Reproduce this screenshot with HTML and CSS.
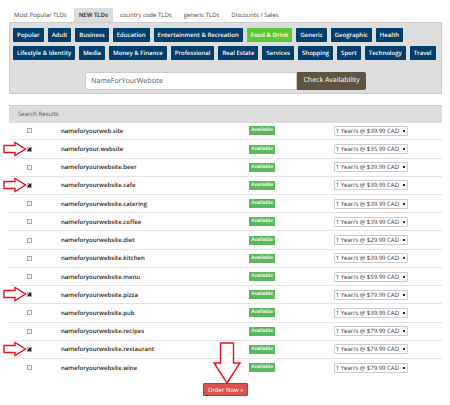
FILE: index.html
```html
<!DOCTYPE html>
<html lang="en">
<head>
<meta charset="utf-8">
<title>Domain search</title>
<link rel="stylesheet" href="styles.css">
</head>
<body>
<main class="page">
  <nav class="tabs">
    <a class="tab" href="#">Most Popular TLDs</a>
    <a class="tab active" href="#">NEW TLDs</a>
    <a class="tab" href="#">country code TLDs</a>
    <a class="tab" href="#">generic TLDs</a>
    <a class="tab" href="#">Discounts / Sales</a>
  </nav>
  <section class="panel">
    <div class="tags">
      <button class="tag">Popular</button>
      <button class="tag">Adult</button>
      <button class="tag">Business</button>
      <button class="tag">Education</button>
      <button class="tag">Entertainment &amp; Recreation</button>
      <button class="tag selected">Food &amp; Drink</button>
      <button class="tag">Generic</button>
      <button class="tag">Geographic</button>
      <button class="tag">Health</button>
    </div>
    <div class="tags">
      <button class="tag">Lifestyle &amp; Identity</button>
      <button class="tag">Media</button>
      <button class="tag">Money &amp; Finance</button>
      <button class="tag">Professional</button>
      <button class="tag">Real Estate</button>
      <button class="tag">Services</button>
      <button class="tag">Shopping</button>
      <button class="tag">Sport</button>
      <button class="tag">Technology</button>
      <button class="tag">Travel</button>
    </div>
    <form class="search">
      <input class="query" type="text" value="NameForYourWebsite" aria-label="Domain name">
      <button class="check" type="button">Check Availability</button>
    </form>
  </section>
  <table class="results">
    <colgroup><col class="pick"><col class="name-col"><col class="state"><col></colgroup>
    <thead><tr><th colspan="4">Search Results</th></tr></thead>
    <tbody id="rows"></tbody>
  </table>
  <div class="actions">
    <button class="order">Order Now »</button>
    <svg class="down" viewBox="0 0 28 42" aria-hidden="true"><path d="M7.5 1H20.5V21H27L14 41L1 21H7.5Z"/></svg>
  </div>
</main>
<script src="rows.js"></script>
</body>
</html>
```
FILE: rows.js
```js
const domains = [
  ["nameforyourweb.site", "39.99", false],
  ["nameforyour.website", "35.99", true],
  ["nameforyourwebsite.beer", "39.99", false],
  ["nameforyourwebsite.cafe", "39.99", true],
  ["nameforyourwebsite.catering", "39.99", false],
  ["nameforyourwebsite.coffee", "39.99", false],
  ["nameforyourwebsite.diet", "29.99", false],
  ["nameforyourwebsite.kitchen", "39.99", false],
  ["nameforyourwebsite.menu", "59.99", false],
  ["nameforyourwebsite.pizza", "79.99", true],
  ["nameforyourwebsite.pub", "39.99", false],
  ["nameforyourwebsite.recipes", "79.99", false],
  ["nameforyourwebsite.restaurant", "79.99", true],
  ["nameforyourwebsite.wine", "79.99", false]
];
const arrow = '<svg class="arrow" viewBox="0 0 24 16" aria-hidden="true"><path d="M1 4.5H12V1.5L22.5 8L12 14.5V11.5H1Z"/></svg>';
document.getElementById("rows").innerHTML = domains.map(([name, price, on], i) => `
  <tr>
    <td><div class="pick-box"><input type="checkbox" id="d${i}"${on ? " checked" : ""}>${on ? arrow : ""}</div></td>
    <td class="name"><label for="d${i}">${name}</label></td>
    <td class="status"><span class="badge">Available</span></td>
    <td class="price"><select aria-label="Term for ${name}"><option>1 Year/s @ $${price} CAD</option></select></td>
  </tr>`).join("");
```
FILE: styles.css
```css
* { box-sizing: border-box; }
body {
  margin: 0;
  background: #fff;
  color: #444;
  font-family: "Open Sans", sans-serif;
  font-size: 6px;
  line-height: 10px;
  text-rendering: geometricPrecision;
}
button, input, select { font: inherit; margin: 0; text-rendering: inherit; }
.page { padding: 8px 8px 0 9px; }
.tabs { display: flex; gap: 2px; }
.tab {
  padding: 2px 5px;
  height: 14px;
  color: #444;
  text-decoration: none;
  white-space: nowrap;
}
.tab.active { background: #ddd; color: #222; font-weight: 600; }
.panel {
  padding: 5px 3px 3px;
  background: #ddd;
  border: 1px solid #ccc;
}
.tags { display: flex; gap: 4px; margin-bottom: 4px; }
.tag {
  height: 14px;
  padding: 0 4px;
  border: 0;
  border-radius: 1px;
  background: #003e6b;
  color: #fff;
  font-weight: 600;
  white-space: nowrap;
}
.tag.selected { background: #5ac837; }
.search { display: flex; margin: 12px 17% 0 17%; }
.query {
  flex: 1;
  min-width: 0;
  height: 18px;
  padding: 0 5px;
  border: 1px solid #ccc;
  border-radius: 2px 0 0 2px;
  background: #fff;
  color: #555;
  font-size: 7px;
}
.check {
  height: 18px;
  padding: 0 6px;
  border: 0;
  border-radius: 0 2px 2px 0;
  background: #5e5240;
  color: #fff;
  font-size: 7px;
}
.results {
  width: 100%;
  height: 271px;
  margin-top: 11px;
  border-collapse: collapse;
  table-layout: fixed;
}
.results th {
  height: 17px;
  padding: 0 9px;
  background: #ddd;
  border-top: 1px solid #ccc;
  color: #555;
  font-weight: 400;
  text-align: left;
}
.results td { padding: 0; border-bottom: 1px solid #e4e4e4; }
.results tr:last-child td { border-bottom: 0; }
.results .status { padding-left: 2px; }
.pick { width: 12%; }
.name-col { width: 43%; }
.state { width: 20%; }
.name { font-weight: 600; color: #222; }
.pick-box { position: relative; display: flex; padding-left: 18px; }
.pick-box input {
  appearance: none;
  width: 5px;
  height: 5px;
  border: 1px solid #aaa;
  background: #f2f2f2;
}
.pick-box input:checked { background: linear-gradient(135deg, #ddd 30%, #222 30%); }
.arrow { position: absolute; left: -6px; top: -6px; width: 24px; height: 16px; }
.arrow path, .down path { fill: #fff; stroke: #e3151a; stroke-width: 1.4; }
.badge {
  display: block;
  width: 26px;
  height: 9px;
  background: #5cb85c;
  color: #fff;
  font-size: 5px;
  font-weight: 600;
  line-height: 9px;
  text-align: center;
}
.price select {
  appearance: none;
  display: block;
  width: 74px;
  height: 10px;
  padding: 0 1px;
  border: 1px solid #ccc;
  border-radius: 1px;
  background: #fff linear-gradient(#333, #333) no-repeat right 2px center / 2px 2px;
  color: #333;
  line-height: 8px;
}
.actions { position: relative; display: flex; justify-content: center; margin-top: 7px; }
.order {
  height: 13px;
  padding: 0 4px;
  border: 1px solid #c9302c;
  border-radius: 1px;
  background: #d9534f;
  color: #fff;
  line-height: 10px;
}
.down { position: absolute; left: 50%; bottom: 12px; width: 28px; height: 42px; margin-left: -13px; }
```
